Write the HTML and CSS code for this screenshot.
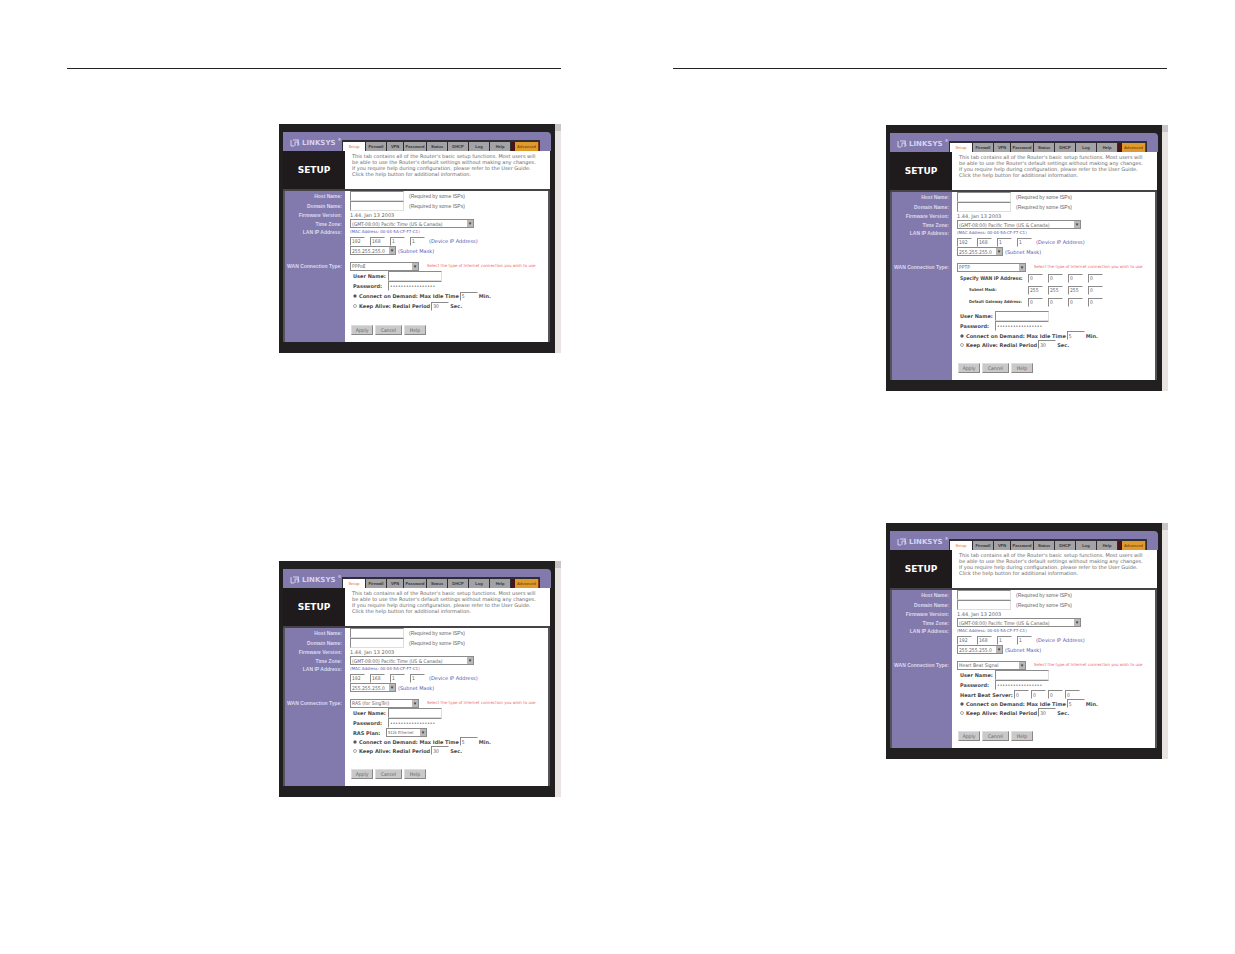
FILE: index.html
```html
<!DOCTYPE html>
<html lang="en">
<head>
<meta charset="utf-8">
<title>Router Setup</title>
<link rel="stylesheet" href="styles.css">
</head>
<body>
<svg width="0" height="0" class="defs" aria-hidden="true">
  <symbol id="mark" viewBox="0 0 10 8"><path d="M1 1v6h3M5 7V3h3v4M3 1h6M8 1l1 5" fill="none" stroke="#d6d3f2" stroke-width="1"/></symbol>
</svg>
<main class="spread">
<section class="sheet">

<article class="panel">
  <div class="frame">
    <header class="masthead">
      <div class="logo"><svg class="mark"><use href="#mark"/></svg>LINKSYS<sup>®</sup></div>
      <nav class="tabs"><a class="current" href="#">Setup</a><a href="#">Firewall</a><a class="short" href="#">VPN</a><a class="long" href="#">Password</a><a href="#">Status</a><a href="#">DHCP</a><a href="#">Log</a><a href="#">Help</a><a class="advanced" href="#">Advanced</a></nav>
    </header>
    <div class="intro"><h2>SETUP</h2><p>This tab contains all of the Router's basic setup functions. Most users will<br>be able to use the Router's default settings without making any changes.<br>If you require help during configuration, please refer to the User Guide.<br>Click the help button for additional information.</p></div>
    <form class="settings">
      <div class="row"><label class="name" for="a-host">Host Name:</label><div class="field"><input class="text" id="a-host"><small>(Required by some ISPs)</small></div></div>
      <div class="row"><label class="name" for="a-domain">Domain Name:</label><div class="field"><input class="text" id="a-domain"><small>(Required by some ISPs)</small></div></div>
      <div class="row tight"><span class="name">Firmware Version:</span><div class="field">1.44, Jan 13 2003</div></div>
      <div class="row mid"><label class="name" for="a-zone">Time Zone:</label><div class="field"><span class="pick zone"><select id="a-zone"><option>(GMT-08:00) Pacific Time (US &amp; Canada)</option></select></span></div></div>
      <div class="row tight"><span class="name">LAN IP Address:</span><div class="field mac">(MAC Address: 00-04-5A-CF-F7-C1)</div></div>
      <div class="row"><span class="name"></span><div class="field"><span class="octets"><input aria-label="LAN IP 1" value="192"><input aria-label="LAN IP 2" value="168"><input aria-label="LAN IP 3" value="1"><input aria-label="LAN IP 4" value="1"></span><span class="note">(Device IP Address)</span></div></div>
      <div class="row mid"><span class="name"></span><div class="field"><span class="pick mask"><select id="a-mask"><option>255.255.255.0</option></select></span><label class="note" for="a-mask">(Subnet Mask)</label></div></div>
      <div class="row wan"><label class="name" for="a-wan">WAN Connection Type:</label><div class="field"><span class="pick type"><select id="a-wan"><option>PPPoE</option></select></span><em>Select the type of Internet connection you wish to use</em></div></div>
      <div class="row sub"><span class="name"></span><div class="field"><label class="cap" for="a-user">User Name:</label><input class="text" id="a-user"></div></div>
      <div class="row sub"><span class="name"></span><div class="field"><label class="cap" for="a-pass">Password:</label><input class="text pass" type="password" id="a-pass" value="12345678901234567"></div></div>
      <div class="row sub option"><span class="name"></span><div class="field"><input type="radio" name="a-mode" id="a-demand" checked><label for="a-demand">Connect on Demand: Max Idle Time</label><input class="num" aria-label="Minutes" value="5"><b>Min.</b></div></div>
      <div class="row sub option"><span class="name"></span><div class="field"><input type="radio" name="a-mode" id="a-keep"><label for="a-keep">Keep Alive: Redial Period</label><input class="num" aria-label="Seconds" value="30"><b>Sec.</b></div></div>
      <div class="row actions"><span class="name"></span><div class="field"><button type="button">Apply</button><button type="button">Cancel</button><button type="button">Help</button></div></div>
    </form>
  </div>
  <div class="scroll"></div>
</article>

<article class="panel compact">
  <div class="frame">
    <header class="masthead">
      <div class="logo"><svg class="mark"><use href="#mark"/></svg>LINKSYS<sup>®</sup></div>
      <nav class="tabs"><a class="current" href="#">Setup</a><a href="#">Firewall</a><a class="short" href="#">VPN</a><a class="long" href="#">Password</a><a href="#">Status</a><a href="#">DHCP</a><a href="#">Log</a><a href="#">Help</a><a class="advanced" href="#">Advanced</a></nav>
    </header>
    <div class="intro"><h2>SETUP</h2><p>This tab contains all of the Router's basic setup functions. Most users will<br>be able to use the Router's default settings without making any changes.<br>If you require help during configuration, please refer to the User Guide.<br>Click the help button for additional information.</p></div>
    <form class="settings">
      <div class="row"><label class="name" for="b-host">Host Name:</label><div class="field"><input class="text" id="b-host"><small>(Required by some ISPs)</small></div></div>
      <div class="row"><label class="name" for="b-domain">Domain Name:</label><div class="field"><input class="text" id="b-domain"><small>(Required by some ISPs)</small></div></div>
      <div class="row tight"><span class="name">Firmware Version:</span><div class="field">1.44, Jan 13 2003</div></div>
      <div class="row mid"><label class="name" for="b-zone">Time Zone:</label><div class="field"><span class="pick zone"><select id="b-zone"><option>(GMT-08:00) Pacific Time (US &amp; Canada)</option></select></span></div></div>
      <div class="row tight"><span class="name">LAN IP Address:</span><div class="field mac">(MAC Address: 00-04-5A-CF-F7-C1)</div></div>
      <div class="row"><span class="name"></span><div class="field"><span class="octets"><input aria-label="LAN IP 1" value="192"><input aria-label="LAN IP 2" value="168"><input aria-label="LAN IP 3" value="1"><input aria-label="LAN IP 4" value="1"></span><span class="note">(Device IP Address)</span></div></div>
      <div class="row mid"><span class="name"></span><div class="field"><span class="pick mask"><select id="b-mask"><option>255.255.255.0</option></select></span><label class="note" for="b-mask">(Subnet Mask)</label></div></div>
      <div class="row wan"><label class="name" for="b-wan">WAN Connection Type:</label><div class="field"><span class="pick type"><select id="b-wan"><option>RAS (for SingTel)</option></select></span><em>Select the type of Internet connection you wish to use</em></div></div>
      <div class="row sub"><span class="name"></span><div class="field"><label class="cap" for="b-user">User Name:</label><input class="text" id="b-user"></div></div>
      <div class="row sub"><span class="name"></span><div class="field"><label class="cap" for="b-pass">Password:</label><input class="text pass" type="password" id="b-pass" value="12345678901234567"></div></div>
      <div class="row sub option"><span class="name"></span><div class="field"><label class="cap" for="b-plan">RAS Plan:</label><span class="pick plan"><select id="b-plan"><option>512k Ethernet</option></select></span></div></div>
      <div class="row sub option"><span class="name"></span><div class="field"><input type="radio" name="b-mode" id="b-demand" checked><label for="b-demand">Connect on Demand: Max Idle Time</label><input class="num" aria-label="Minutes" value="5"><b>Min.</b></div></div>
      <div class="row sub option"><span class="name"></span><div class="field"><input type="radio" name="b-mode" id="b-keep"><label for="b-keep">Keep Alive: Redial Period</label><input class="num" aria-label="Seconds" value="30"><b>Sec.</b></div></div>
      <div class="row actions"><span class="name"></span><div class="field"><button type="button">Apply</button><button type="button">Cancel</button><button type="button">Help</button></div></div>
    </form>
  </div>
  <div class="scroll"></div>
</article>
</section>

<section class="sheet facing">
<article class="panel compact">
  <div class="frame">
    <header class="masthead">
      <div class="logo"><svg class="mark"><use href="#mark"/></svg>LINKSYS<sup>®</sup></div>
      <nav class="tabs"><a class="current" href="#">Setup</a><a href="#">Firewall</a><a class="short" href="#">VPN</a><a class="long" href="#">Password</a><a href="#">Status</a><a href="#">DHCP</a><a href="#">Log</a><a href="#">Help</a><a class="advanced" href="#">Advanced</a></nav>
    </header>
    <div class="intro"><h2>SETUP</h2><p>This tab contains all of the Router's basic setup functions. Most users will<br>be able to use the Router's default settings without making any changes.<br>If you require help during configuration, please refer to the User Guide.<br>Click the help button for additional information.</p></div>
    <form class="settings">
      <div class="row"><label class="name" for="c-host">Host Name:</label><div class="field"><input class="text" id="c-host"><small>(Required by some ISPs)</small></div></div>
      <div class="row"><label class="name" for="c-domain">Domain Name:</label><div class="field"><input class="text" id="c-domain"><small>(Required by some ISPs)</small></div></div>
      <div class="row tight"><span class="name">Firmware Version:</span><div class="field">1.44, Jan 13 2003</div></div>
      <div class="row mid"><label class="name" for="c-zone">Time Zone:</label><div class="field"><span class="pick zone"><select id="c-zone"><option>(GMT-08:00) Pacific Time (US &amp; Canada)</option></select></span></div></div>
      <div class="row tight"><span class="name">LAN IP Address:</span><div class="field mac">(MAC Address: 00-04-5A-CF-F7-C1)</div></div>
      <div class="row"><span class="name"></span><div class="field"><span class="octets"><input aria-label="LAN IP 1" value="192"><input aria-label="LAN IP 2" value="168"><input aria-label="LAN IP 3" value="1"><input aria-label="LAN IP 4" value="1"></span><span class="note">(Device IP Address)</span></div></div>
      <div class="row mid"><span class="name"></span><div class="field"><span class="pick mask"><select id="c-mask"><option>255.255.255.0</option></select></span><label class="note" for="c-mask">(Subnet Mask)</label></div></div>
      <div class="row wan"><label class="name" for="c-wan">WAN Connection Type:</label><div class="field"><span class="pick type"><select id="c-wan"><option>PPTP</option></select></span><em>Select the type of Internet connection you wish to use</em></div></div>
      <div class="row sub address"><span class="name"></span><div class="field"><span class="cap main">Specify WAN IP Address:</span><span class="octets"><input aria-label="WAN IP 1" value="0"><input aria-label="WAN IP 2" value="0"><input aria-label="WAN IP 3" value="0"><input aria-label="WAN IP 4" value="0"></span></div></div>
      <div class="row sub address"><span class="name"></span><div class="field"><span class="cap">Subnet Mask:</span><span class="octets"><input aria-label="Mask 1" value="255"><input aria-label="Mask 2" value="255"><input aria-label="Mask 3" value="255"><input aria-label="Mask 4" value="0"></span></div></div>
      <div class="row sub address last"><span class="name"></span><div class="field"><span class="cap">Default Gateway Address:</span><span class="octets"><input aria-label="Gateway 1" value="0"><input aria-label="Gateway 2" value="0"><input aria-label="Gateway 3" value="0"><input aria-label="Gateway 4" value="0"></span></div></div>
      <div class="row sub"><span class="name"></span><div class="field"><label class="cap" for="c-user">User Name:</label><input class="text" id="c-user"></div></div>
      <div class="row sub"><span class="name"></span><div class="field"><label class="cap" for="c-pass">Password:</label><input class="text pass" type="password" id="c-pass" value="12345678901234567"></div></div>
      <div class="row sub option"><span class="name"></span><div class="field"><input type="radio" name="c-mode" id="c-demand" checked><label for="c-demand">Connect on Demand: Max Idle Time</label><input class="num" aria-label="Minutes" value="5"><b>Min.</b></div></div>
      <div class="row sub option"><span class="name"></span><div class="field"><input type="radio" name="c-mode" id="c-keep"><label for="c-keep">Keep Alive: Redial Period</label><input class="num" aria-label="Seconds" value="30"><b>Sec.</b></div></div>
      <div class="row actions"><span class="name"></span><div class="field"><button type="button">Apply</button><button type="button">Cancel</button><button type="button">Help</button></div></div>
    </form>
  </div>
  <div class="scroll"></div>
</article>

<article class="panel compact">
  <div class="frame">
    <header class="masthead">
      <div class="logo"><svg class="mark"><use href="#mark"/></svg>LINKSYS<sup>®</sup></div>
      <nav class="tabs"><a class="current" href="#">Setup</a><a href="#">Firewall</a><a class="short" href="#">VPN</a><a class="long" href="#">Password</a><a href="#">Status</a><a href="#">DHCP</a><a href="#">Log</a><a href="#">Help</a><a class="advanced" href="#">Advanced</a></nav>
    </header>
    <div class="intro"><h2>SETUP</h2><p>This tab contains all of the Router's basic setup functions. Most users will<br>be able to use the Router's default settings without making any changes.<br>If you require help during configuration, please refer to the User Guide.<br>Click the help button for additional information.</p></div>
    <form class="settings">
      <div class="row"><label class="name" for="d-host">Host Name:</label><div class="field"><input class="text" id="d-host"><small>(Required by some ISPs)</small></div></div>
      <div class="row"><label class="name" for="d-domain">Domain Name:</label><div class="field"><input class="text" id="d-domain"><small>(Required by some ISPs)</small></div></div>
      <div class="row tight"><span class="name">Firmware Version:</span><div class="field">1.44, Jan 13 2003</div></div>
      <div class="row mid"><label class="name" for="d-zone">Time Zone:</label><div class="field"><span class="pick zone"><select id="d-zone"><option>(GMT-08:00) Pacific Time (US &amp; Canada)</option></select></span></div></div>
      <div class="row tight"><span class="name">LAN IP Address:</span><div class="field mac">(MAC Address: 00-04-5A-CF-F7-C1)</div></div>
      <div class="row"><span class="name"></span><div class="field"><span class="octets"><input aria-label="LAN IP 1" value="192"><input aria-label="LAN IP 2" value="168"><input aria-label="LAN IP 3" value="1"><input aria-label="LAN IP 4" value="1"></span><span class="note">(Device IP Address)</span></div></div>
      <div class="row mid"><span class="name"></span><div class="field"><span class="pick mask"><select id="d-mask"><option>255.255.255.0</option></select></span><label class="note" for="d-mask">(Subnet Mask)</label></div></div>
      <div class="row wan"><label class="name" for="d-wan">WAN Connection Type:</label><div class="field"><span class="pick type"><select id="d-wan"><option>Heart Beat Signal</option></select></span><em>Select the type of Internet connection you wish to use</em></div></div>
      <div class="row sub"><span class="name"></span><div class="field"><label class="cap" for="d-user">User Name:</label><input class="text" id="d-user"></div></div>
      <div class="row sub"><span class="name"></span><div class="field"><label class="cap" for="d-pass">Password:</label><input class="text pass" type="password" id="d-pass" value="12345678901234567"></div></div>
      <div class="row sub option"><span class="name"></span><div class="field"><span class="cap server">Heart Beat Server:</span><span class="octets close"><input aria-label="Server 1" value="0"><input aria-label="Server 2" value="0"><input aria-label="Server 3" value="0"><input aria-label="Server 4" value="0"></span></div></div>
      <div class="row sub option"><span class="name"></span><div class="field"><input type="radio" name="d-mode" id="d-demand" checked><label for="d-demand">Connect on Demand: Max Idle Time</label><input class="num" aria-label="Minutes" value="5"><b>Min.</b></div></div>
      <div class="row sub option"><span class="name"></span><div class="field"><input type="radio" name="d-mode" id="d-keep"><label for="d-keep">Keep Alive: Redial Period</label><input class="num" aria-label="Seconds" value="30"><b>Sec.</b></div></div>
      <div class="row actions"><span class="name"></span><div class="field"><button type="button">Apply</button><button type="button">Cancel</button><button type="button">Help</button></div></div>
    </form>
  </div>
  <div class="scroll"></div>
</article>
</section>
</main>
</body>
</html>
```
FILE: styles.css
```css
* { box-sizing: border-box; }
body {
  margin: 0;
  background: #fff;
  color: #686868;
  font: 5px/6px "DejaVu Sans", sans-serif;
}
.defs { display: block; }
.spread {
  display: grid;
  grid-template-columns: 1fr 1fr;
  gap: 112px;
  padding: 68px 68px 68px 67px;
}
.sheet {
  display: flex;
  flex-direction: column;
  align-items: flex-end;
  gap: 208px;
  padding-top: 55px;
  border-top: 1px solid #222;
}
.facing { gap: 132px; padding-top: 56px; }
.facing .panel { margin-right: -1px; }

.panel { display: flex; width: 282px; }
.frame {
  flex: 1;
  min-width: 0;
  padding: 8px 4px 11px;
  background: #221f21;
}
.scroll {
  width: 6px;
  background: #e9e3e2;
  border-top: 7px solid #c9c5c5;
}

.masthead {
  display: flex;
  align-items: flex-end;
  justify-content: space-between;
  height: 19px;
  padding-right: 11px;
  background: #8279ac;
  border-top-right-radius: 4px;
}
.logo {
  display: flex;
  align-items: center;
  gap: 2px;
  height: 17px;
  padding-left: 7px;
  color: #d6d3f2;
  font: bold 7px/8px "DejaVu Sans", sans-serif;
}
.logo sup { font-size: 4px; line-height: 4px; align-self: flex-start; padding-top: 4px; }
.mark { width: 10px; height: 8px; }
.tabs {
  display: flex;
  gap: 1px;
  padding: 2px 1px 0;
  background: #302d35;
}
.tabs a {
  width: 20px;
  height: 9px;
  background: #a3a2a5;
  color: #343434;
  font: bold 4px/9px "Liberation Sans", sans-serif;
  text-align: center;
  text-decoration: none;
  overflow: hidden;
}
.tabs .short { width: 16px; }
.tabs .long { width: 22px; }
.tabs .current { width: 22px; background: #fff; color: #f0976b; }
.tabs .advanced {
  width: 28px;
  background: #e09a2b;
  color: #8a5312;
  border-left: 4px solid #48151a;
  border-right: 1px solid #8a3a12;
}

.intro {
  display: grid;
  grid-template-columns: 62px 1fr;
  margin-right: 1px;
  border-bottom: 2px solid #454348;
}
.intro h2 {
  margin: 0;
  background: #1f1b1d;
  color: #fff;
  font: bold 9px/38px "DejaVu Sans", sans-serif;
  text-align: center;
}
.intro p {
  margin: 0;
  padding: 2px 0 0 7px;
  background: #fff;
  white-space: nowrap;
}

.settings {
  margin-right: 1px;
  border: solid #55535a;
  border-width: 0 2px;
  background: #fff;
}
.row { display: grid; grid-template-columns: 60px 1fr; height: 10px; }
.row.tight { height: 8px; }
.row.mid, .compact .option { height: 9px; }
.name {
  display: flex;
  align-items: center;
  justify-content: flex-end;
  padding-right: 3px;
  background: #8279ac;
  color: #dcd9ee;
  font: bold 5px/6px "Liberation Sans", sans-serif;
  white-space: nowrap;
}
.field {
  display: flex;
  align-items: center;
  padding-left: 5px;
  white-space: nowrap;
}
.row.wan { height: 16px; }
.wan .name, .wan .field { padding-top: 6px; }
.sub .field { padding-left: 8px; color: #4a4a4a; font-weight: bold; }

input, select, button {
  margin: 0;
  padding: 0 1px;
  border: 1px solid #8b8b8b;
  border-radius: 0;
  background: #fff;
  color: #666;
  font: 5px/6px "DejaVu Sans Condensed", "DejaVu Sans", sans-serif;
}
input { border-right-color: #dedede; border-bottom-color: #dedede; }
.text { width: 54px; height: 10px; }
.pass { border-right-color: #fff; border-bottom-color: #fff; }
small { padding-left: 5px; font: 5px/6px "Liberation Sans", sans-serif; }
.mac, em { font-size: 4px; font-style: normal; }
.mac, .note { color: #5357b0; }
em { padding-left: 8px; color: #ee6868; }

.pick { position: relative; display: flex; }
.pick select { width: 100%; height: 9px; appearance: none; }
.pick::after {
  content: "▾";
  position: absolute;
  top: 1px;
  right: 1px;
  width: 6px;
  height: 7px;
  background: #b9b9b9;
  color: #333;
  line-height: 7px;
  text-align: center;
  pointer-events: none;
}
.zone { width: 124px; }
.mask { width: 46px; }
.type { width: 69px; }
.plan { width: 41px; }
.plan select { font-size: 4px; }
.mask + .note { padding-left: 2px; }

.octets { display: flex; gap: 5px; width: 79px; }
.octets input { width: 15px; height: 9px; border-right-color: #fff; border-bottom-color: #fff; }
.octets.close { gap: 2px; }

.cap { width: 35px; }
.option .cap { width: 33px; }
.option .server { width: 54px; }
.address .cap {
  width: 68px;
  padding-left: 9px;
  font-family: "DejaVu Sans Condensed", "DejaVu Sans", sans-serif;
  font-size: 4px;
}
.address .main { padding-left: 0; font-size: 5px; }
.row.address { height: 12px; }
.row.last { height: 15px; }
.last .field { padding-bottom: 3px; }

input[type="radio"] {
  appearance: none;
  width: 4px;
  height: 4px;
  margin-right: 2px;
  padding: 0;
  border: 1px solid #aaa;
  border-radius: 2px;
}
input[type="radio"]:checked { background: #333; }
.num { width: 18px; height: 9px; margin: 0 1px; border-right-color: #fff; border-bottom-color: #fff; }

.row.actions { height: 31px; }
.actions .field { align-items: flex-start; gap: 2px; padding: 14px 0 0 6px; }
button {
  width: 22px;
  height: 10px;
  padding: 0;
  background: #c9c9c9;
  border-color: #ddd #888 #888 #ddd;
  text-align: center;
}
button:nth-child(2) { width: 27px; }
```
